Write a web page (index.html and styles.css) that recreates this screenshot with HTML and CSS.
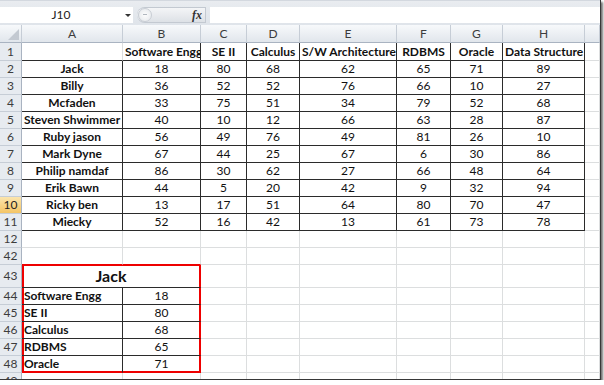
FILE: index.html
```html
<!DOCTYPE html>
<html lang="en">
<head>
  <meta charset="UTF-8" />
  <title>Excel sheet</title>
  <link rel="stylesheet" href="styles.css">
</head>
<body>

  <div class="window">
    <div class="fbar">
      <div class="namebox">J10</div>
      <div class="nbarrow"><span></span></div>
      <div class="fxbtn"><span class="knob"></span><i class="fx">fx</i></div>
      <div class="finput"></div>
    </div>

    <table class="sheet">
      <colgroup>
        <col class="c-hdr"><col class="c-a"><col class="c-b"><col class="c-c"><col class="c-d">
        <col class="c-e"><col class="c-f"><col class="c-g"><col class="c-h"><col class="c-i">
      </colgroup>
      <tr class="colhdr">
        <th class="corner"><span></span></th>
        <th>A</th><th>B</th><th>C</th><th>D</th><th>E</th><th>F</th><th>G</th><th>H</th><th></th>
      </tr>
      <tr class="r1">
        <th>1</th>
        <td class="a1"></td>
        <td class="d b">Software Engg</td>
        <td class="d b">SE II</td>
        <td class="d b">Calculus</td>
        <td class="d b">S/W Architecture</td>
        <td class="d b">RDBMS</td>
        <td class="d b">Oracle</td>
        <td class="d b">Data Structure</td>
        <td></td>
      </tr>
      <tr><th>2</th><td class="d b">Jack</td><td class="d">18</td><td class="d">80</td><td class="d">68</td><td class="d">62</td><td class="d">65</td><td class="d">71</td><td class="d">89</td><td></td></tr>
      <tr><th>3</th><td class="d b">Billy</td><td class="d">36</td><td class="d">52</td><td class="d">52</td><td class="d">76</td><td class="d">66</td><td class="d">10</td><td class="d">27</td><td></td></tr>
      <tr><th>4</th><td class="d b">Mcfaden</td><td class="d">33</td><td class="d">75</td><td class="d">51</td><td class="d">34</td><td class="d">79</td><td class="d">52</td><td class="d">68</td><td></td></tr>
      <tr><th>5</th><td class="d b">Steven Shwimmer</td><td class="d">40</td><td class="d">10</td><td class="d">12</td><td class="d">66</td><td class="d">63</td><td class="d">28</td><td class="d">87</td><td></td></tr>
      <tr><th>6</th><td class="d b">Ruby jason</td><td class="d">56</td><td class="d">49</td><td class="d">76</td><td class="d">49</td><td class="d">81</td><td class="d">26</td><td class="d">10</td><td></td></tr>
      <tr><th>7</th><td class="d b">Mark Dyne</td><td class="d">67</td><td class="d">44</td><td class="d">25</td><td class="d">67</td><td class="d">6</td><td class="d">30</td><td class="d">86</td><td></td></tr>
      <tr><th>8</th><td class="d b">Philip namdaf</td><td class="d">86</td><td class="d">30</td><td class="d">62</td><td class="d">27</td><td class="d">66</td><td class="d">48</td><td class="d">64</td><td></td></tr>
      <tr><th>9</th><td class="d b">Erik Bawn</td><td class="d">44</td><td class="d">5</td><td class="d">20</td><td class="d">42</td><td class="d">9</td><td class="d">32</td><td class="d">94</td><td></td></tr>
      <tr><th class="sel">10</th><td class="d b">Ricky ben</td><td class="d">13</td><td class="d">17</td><td class="d">51</td><td class="d">64</td><td class="d">80</td><td class="d">70</td><td class="d">47</td><td></td></tr>
      <tr><th>11</th><td class="d b">Miecky</td><td class="d">52</td><td class="d">16</td><td class="d">42</td><td class="d">13</td><td class="d">61</td><td class="d">73</td><td class="d">78</td><td></td></tr>
      <tr><th>12</th><td></td><td></td><td></td><td></td><td></td><td></td><td></td><td></td><td></td></tr>
      <tr><th>42</th><td class="redtop"></td><td class="redtop"></td><td></td><td></td><td></td><td></td><td></td><td></td><td></td></tr>
      <tr class="r43">
        <th>43</th>
        <td class="d title box-t" colspan="2">Jack</td>
        <td></td><td></td><td></td><td></td><td></td><td></td><td></td>
      </tr>
      <tr><th>44</th><td class="d b lbl box-l">Software Engg</td><td class="d box-r">18</td><td></td><td></td><td></td><td></td><td></td><td></td><td></td></tr>
      <tr><th>45</th><td class="d b lbl box-l">SE II</td><td class="d box-r">80</td><td></td><td></td><td></td><td></td><td></td><td></td><td></td></tr>
      <tr><th>46</th><td class="d b lbl box-l">Calculus</td><td class="d box-r">68</td><td></td><td></td><td></td><td></td><td></td><td></td><td></td></tr>
      <tr><th>47</th><td class="d b lbl box-l">RDBMS</td><td class="d box-r">65</td><td></td><td></td><td></td><td></td><td></td><td></td><td></td></tr>
      <tr class="r48"><th>48</th><td class="d b lbl box-l">Oracle</td><td class="d box-r">71</td><td></td><td></td><td></td><td></td><td></td><td></td><td></td></tr>
      <tr><th>49</th><td></td><td></td><td></td><td></td><td></td><td></td><td></td><td></td><td></td></tr>
    </table>
  </div>

</body>
</html>
```

FILE: styles.css
```css
body {
  margin: 0;
  background: #fff;
  font-family: Lato, "Liberation Sans", sans-serif;
}

.window {
  width: 600px;
  height: 379px;
  overflow: hidden;
  background: #fff;
  border-right: 1px solid #383838;
  border-bottom: 1px solid #383838;
  box-shadow: 2px 2px 2px rgba(0, 0, 0, 0.55);
}

/* formula bar */
.fbar {
  height: 25px;
  box-sizing: border-box;
  display: flex;
  align-items: flex-start;
  padding-top: 6px;
  background: linear-gradient(#e9ecf0, #dfe4ea);
  border-top: 1px solid #d3d8df;
}

.namebox {
  width: 122px;
  height: 16px;
  line-height: 16px;
  background: #fff;
  text-align: center;
  font-size: 12px;
  color: #222;
}

.nbarrow {
  width: 11px;
  height: 16px;
  background: #fff;
  display: flex;
  align-items: center;
  justify-content: center;
}

.nbarrow span {
  width: 0;
  height: 0;
  border-left: 3px solid transparent;
  border-right: 3px solid transparent;
  border-top: 3px solid #333;
}

.fxbtn {
  margin-left: 4px;
  width: 69px;
  height: 16px;
  box-sizing: border-box;
  display: flex;
  align-items: center;
  justify-content: space-between;
  background: linear-gradient(#f4f5f7, #dde1e6);
  border: 1px solid #c3c9d1;
  border-left: none;
  border-radius: 9px 0 0 9px;
  position: relative;
}

.knob {
  width: 14px;
  height: 14px;
  box-sizing: border-box;
  margin-left: 1px;
  border-radius: 50%;
  border: 1px solid #c9ced5;
  background: radial-gradient(#fdfdfd, #e3e6ea);
  position: relative;
}

.knob::after {
  content: "";
  position: absolute;
  left: 4px;
  top: 5px;
  width: 4px;
  height: 1px;
  background: #b0b6be;
}

.fx {
  font-family: "Liberation Serif", serif;
  font-weight: bold;
  font-size: 12px;
  color: #333;
  margin-right: 3px;
}

.finput {
  margin-left: 4px;
  flex: 1;
  height: 16px;
  background: #fff;
}

/* grid */
.sheet {
  table-layout: fixed;
  width: 600px;
  border-spacing: 0;
  border-collapse: separate;
  font-size: 12px;
  color: #111;
}

.c-hdr { width: 22px; }
.c-a { width: 101px; }
.c-b { width: 78px; }
.c-c { width: 46px; }
.c-d { width: 53px; }
.c-e { width: 97px; }
.c-f { width: 54px; }
.c-g { width: 52px; }
.c-h { width: 82px; }
.c-i { width: 15px; }

.sheet td,
.sheet th {
  padding: 0 2px;
  height: 16px;
  line-height: 16px;
  border-right: 1px solid #dcdedf;
  border-bottom: 1px solid #dcdedf;
  white-space: nowrap;
  overflow: hidden;
  text-align: center;
}

.sheet th {
  font-weight: normal;
  color: #3c3c3c;
  background: #e7ebf0;
  border-right-color: #a9b3c1;
  border-bottom-color: #c6cdd6;
  padding: 0;
}

.colhdr th {
  height: 17px;
  background: linear-gradient(#f7f9fb, #e1e6ec);
  border-right-color: #c6cdd6;
  border-bottom-color: #a9b3c1;
}

.corner {
  position: relative;
}

.corner span {
  position: absolute;
  right: 2px;
  bottom: 2px;
  width: 0;
  height: 0;
  border-left: 11px solid transparent;
  border-bottom: 11px solid #c3c9d1;
}

.sheet th.sel {
  background: linear-gradient(#fbe5ae, #f4c566);
  color: #222;
}

.r1 td,
.r1 th {
  height: 17px;
}

.sheet .d {
  border-right-color: #2b2b2b;
  border-bottom-color: #2b2b2b;
}

.sheet .a1 {
  border-bottom-color: #2b2b2b;
}

.b {
  font-weight: bold;
}

/* summary box */
.r43 td,
.r43 th {
  height: 22px;
  line-height: 22px;
}

.sheet .title {
  font-weight: bold;
  font-size: 16px;
  border-right-color: #e00;
}

.sheet .redtop {
  border-bottom-color: #e00;
}

.box-t {
  box-shadow: inset 2px 1px 0 #e00, inset -1px 0 0 #e00;
}

.sheet .lbl {
  text-align: left;
}

.box-l {
  box-shadow: inset 2px 0 0 #e00;
}

.sheet .box-r {
  border-right-color: #e00;
  box-shadow: inset -1px 0 0 #e00;
}

.r48 .box-l {
  border-bottom-color: #e00;
  box-shadow: inset 2px -1px 0 #e00;
}

.sheet .r48 .box-r {
  border-bottom-color: #e00;
  box-shadow: inset -1px -1px 0 #e00;
}
```
